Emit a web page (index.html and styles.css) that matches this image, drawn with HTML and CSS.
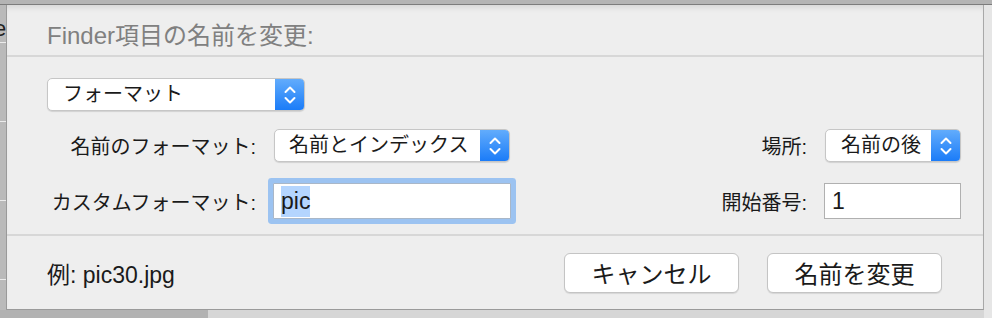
FILE: index.html
```html
<!DOCTYPE html>
<html lang="ja">
<head>
    <meta charset="UTF-8">
    <title>Finder項目の名前を変更</title>
    <link rel="stylesheet" href="styles.css">
</head>
<body>
    <div class="desk">
        <div class="desk-edge">e</div>
        <div class="sheet">
            <div class="sheet-title">Finder項目の名前を変更:</div>

            <div class="sheet-body">
                <div class="popup popup-mode">
                    <span class="popup-text">フォーマット</span>
                    <span class="popup-arrows">
                        <svg width="14" height="22" viewBox="0 0 14 22">
                            <path d="M2.5 8 L7 3.5 L11.5 8 M2.5 14 L7 18.5 L11.5 14" fill="none" stroke="#fff" stroke-width="2" stroke-linecap="round" stroke-linejoin="round"/>
                        </svg>
                    </span>
                </div>

                <div class="form-grid">
                    <div class="label">名前のフォーマット:</div>
                    <div class="popup popup-format">
                        <span class="popup-text">名前とインデックス</span>
                        <span class="popup-arrows">
                            <svg width="14" height="22" viewBox="0 0 14 22">
                                <path d="M2.5 8 L7 3.5 L11.5 8 M2.5 14 L7 18.5 L11.5 14" fill="none" stroke="#fff" stroke-width="2" stroke-linecap="round" stroke-linejoin="round"/>
                            </svg>
                        </span>
                    </div>
                    <div class="label">場所:</div>
                    <div class="popup popup-place">
                        <span class="popup-text">名前の後</span>
                        <span class="popup-arrows">
                            <svg width="14" height="22" viewBox="0 0 14 22">
                                <path d="M2.5 8 L7 3.5 L11.5 8 M2.5 14 L7 18.5 L11.5 14" fill="none" stroke="#fff" stroke-width="2" stroke-linecap="round" stroke-linejoin="round"/>
                            </svg>
                        </span>
                    </div>

                    <div class="label">カスタムフォーマット:</div>
                    <div class="field field-focus"><span class="selected">pic</span></div>
                    <div class="label">開始番号:</div>
                    <div class="field">1</div>
                </div>
            </div>

            <div class="sheet-footer">
                <div class="example">例: pic30.jpg</div>
                <div class="buttons">
                    <button class="btn">キャンセル</button>
                    <button class="btn">名前を変更</button>
                </div>
            </div>
        </div>
    </div>
</body>
</html>
```

FILE: styles.css
```css
body {
    margin: 0;
    font-family: 'Liberation Sans', 'Noto Sans CJK JP', sans-serif;
    color: #1a1a1a;
}

.desk {
    position: relative;
    width: 992px;
    height: 318px;
    box-sizing: border-box;
    padding: 5px 8px 8px 6px;
    background:
        linear-gradient(#b4b4b4 0, #b4b4b4 4px, #7c7c7c 4px, #7c7c7c 5px, transparent 5px),
        linear-gradient(to right, transparent 984px, #e6e6e6 984px),
        linear-gradient(to right, #b2b2b2 208px, #d6d6d6 208px) bottom / 100% 8px no-repeat,
        repeating-linear-gradient(#bababa 0, #bababa 42px, #ececec 42px, #ececec 43px, #bababa 43px, #bababa 79px);
    overflow: hidden;
}

.desk-edge {
    position: absolute;
    left: -6px;
    top: 16px;
    font-size: 22px;
    color: #222;
}

.sheet {
    position: relative;
    height: 305px;
    background-color: #eeeeee;
    border-left: 1px solid #9a9a9a;
    border-right: 1px solid #a8a8a8;
    border-bottom: 1px solid #9a9a9a;
    box-sizing: border-box;
    box-shadow: inset 0 6px 6px -4px rgba(0, 0, 0, 0.12);
    display: flex;
    flex-direction: column;
}

.sheet-title {
    height: 52px;
    box-sizing: border-box;
    padding: 11px 0 0 40px;
    font-size: 24px;
    color: #808080;
    border-bottom: 2px solid #d7d7d7;
}

.sheet-body {
    height: 179px;
    box-sizing: border-box;
    padding: 21px 22px 0 40px;
    border-bottom: 2px solid #d7d7d7;
}

.popup {
    display: flex;
    height: 33px;
    box-sizing: border-box;
    background-color: white;
    border: 1px solid #c6c6c6;
    border-radius: 5px;
    box-shadow: 0 1px 1px rgba(0, 0, 0, 0.12);
    font-size: 20px;
    overflow: hidden;
}

.popup-text {
    flex: 1;
    padding-left: 15px;
    line-height: 31px;
    white-space: nowrap;
}

.popup-arrows {
    width: 29px;
    display: flex;
    align-items: center;
    justify-content: center;
    background: linear-gradient(#62acfc, #1b7cf8);
}

.popup-mode {
    width: 258px;
}

.form-grid {
    display: grid;
    grid-template-columns: 209px 238px 1fr 137px;
    grid-template-rows: 33px 36px;
    column-gap: 17px;
    row-gap: 21px;
    align-items: center;
    margin-top: 18px;
}

.label {
    font-size: 20px;
    text-align: right;
    white-space: nowrap;
}

.popup-format {
    width: 236px;
    margin-left: 1px;
}

.popup-format .popup-text {
    padding-left: 14px;
}

.popup-place {
    width: 136px;
    margin-left: 1px;
}

.field {
    height: 36px;
    box-sizing: border-box;
    background-color: white;
    border: 1px solid #b0b0b0;
    font-size: 23px;
    line-height: 34px;
    padding-left: 7px;
}

.field-focus {
    border-color: #a9b7c8;
    border-radius: 1px;
    box-shadow: 0 0 0 5px #9cc3f1;
}

.selected {
    background-color: #b4d5fe;
    padding: 2px 0 3px;
}

.sheet-footer {
    flex: 1;
    display: flex;
    align-items: center;
    justify-content: space-between;
    padding: 0 41px 0 40px;
}

.example {
    font-size: 23px;
}

.buttons {
    display: flex;
    gap: 28px;
}

.btn {
    width: 175px;
    height: 40px;
    font-family: inherit;
    font-size: 24px;
    color: #1a1a1a;
    background-color: white;
    border: 1px solid #c4c4c4;
    border-radius: 6px;
    box-shadow: 0 1px 1px rgba(0, 0, 0, 0.1);
    padding: 0;
    cursor: pointer;
}
```
